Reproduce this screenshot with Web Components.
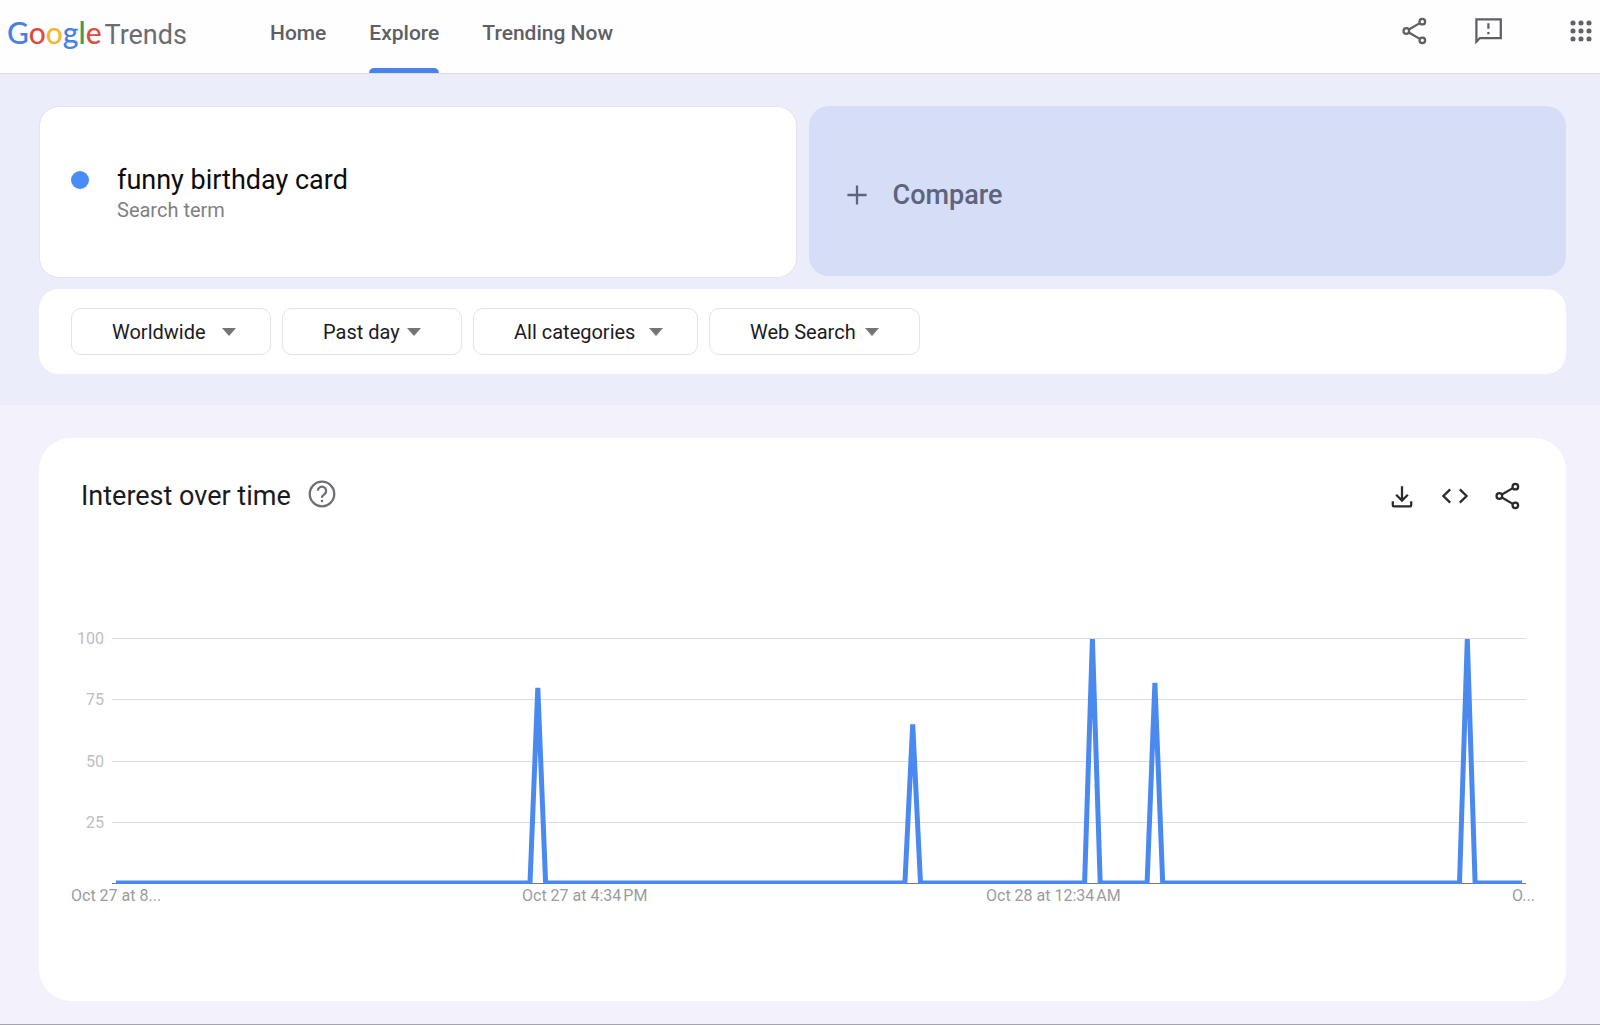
<!DOCTYPE html>
<html lang="en">
<head>
<meta charset="utf-8">
<title>funny birthday card - Explore - Google Trends</title>
<style>
    body {
        margin: 0;
        background: #f3f2fc;
        font-family: Roboto, "Liberation Sans", sans-serif;
        color: #1b1b1f;
    }
</style>
</head>
<body>
<trends-page></trends-page>

<script>
// base class: every element only has to give its template
class TrendsElement extends HTMLElement {
    constructor() {
        super();
        this.attachShadow({ mode: "open" });
    }
    connectedCallback() {
        const template = document.createElement("template");
        template.innerHTML = `<style>${this.getStyles()}</style>${this.getTemplate()}`;
        this.shadowRoot.replaceChildren(template.content.cloneNode(true));
    }
}

const ICONS = {
    share: `<path d="M7.4 10.9L15.6 6.1M7.4 13.1L15.6 17.9"/>
        <circle cx="17.5" cy="5" r="2.1"/><circle cx="5.5" cy="12" r="2.1"/><circle cx="17.5" cy="19" r="2.1"/>`,
    feedback: `<path d="M3.3 20V3.3H21.6V17.3H5.9L3.3 20z"/><path d="M12.3 6.2v4.2M12.3 12.7v1.7"/>`,
    apps: [6, 12, 18].map(y => [6, 12, 18].map(x =>
        `<circle cx="${x}" cy="${y}" r="1.9" fill="currentColor" stroke="none"/>`).join("")).join(""),
    download: `<path d="M12 4.7V15M7.6 11.1l4.4 4.4 4.4-4.4M5.1 16v3c0 .5.3.8.8.8h12.2c.5 0 .8-.3.8-.8v-3"/>`,
    code: `<path d="M8.4 7L3.3 12l5.1 5M15.6 7l5.1 5-5.1 5"/>`,
    help: `<circle cx="12" cy="12" r="9.2"/><path d="M8.9 9.6a3.1 3.1 0 1 1 5.2 2.3c-1.2 1-2.1 1.5-2.1 2.9"/><path d="M12 16.4v1.7"/>`,
    plus: `<path d="M12 4.8v14.4M4.8 12h14.4"/>`
};

class TrendsIcon extends TrendsElement {
    getTemplate() {
        return `<svg viewBox="0 0 24 24" aria-hidden="true">${ICONS[this.getAttribute("name")]}</svg>`;
    }
    getStyles() {
        return `
            :host { display: block; width: 32px; height: 32px; flex: none; }
            svg {
                display: block; width: 100%; height: 100%;
                fill: none; stroke: currentColor; stroke-width: 1.7;
            }
        `;
    }
}
customElements.define("trends-icon", TrendsIcon);

class IconButton extends TrendsElement {
    getTemplate() {
        return `<button type="button" aria-label="${this.getAttribute("label")}">
            <trends-icon name="${this.getAttribute("icon")}"></trends-icon>
        </button>`;
    }
    getStyles() {
        return `
            :host { display: block; }
            button { display: block; padding: 0; border: 0; background: none; color: inherit; cursor: pointer; }
        `;
    }
}
customElements.define("icon-button", IconButton);

class TrendsHeader extends TrendsElement {
    getTemplate() {
        return `
            <a class="logo" href="#home" aria-label="Google Trends"><span class="google"><span class="b">G</span><span class="r">o</span><span class="y">o</span><span class="b">g</span><span class="g">l</span><span class="r">e</span></span><span class="trends">Trends</span></a>
            <nav>
                <a href="#home">Home</a>
                <a href="#explore" aria-current="page">Explore</a>
                <a href="#trending">Trending Now</a>
            </nav>
            <div class="actions">
                <icon-button icon="share" label="Share"></icon-button>
                <icon-button icon="feedback" label="Send feedback"></icon-button>
                <icon-button class="apps" icon="apps" label="Google apps"></icon-button>
            </div>
        `;
    }
    getStyles() {
        return `
            :host {
                display: flex;
                height: 73px;
                padding: 0 3px 0 7px;
                background: #fefdff;
                border-bottom: 1px solid #dddbe8;
                color: #5f6063;
            }
            a { color: inherit; text-decoration: none; }
            .logo {
                display: flex;
                align-items: baseline;
                gap: 3px;
                width: 263px;
                padding-top: 13px;
                line-height: 38px;
            }
            .google { font-family: Lato, sans-serif; font-size: 30px; font-weight: 500; }
            .trends { font-size: 27px; color: #6b6c70; }
            .b { color: #4681e0; }
            .r { color: #dc4c3c; }
            .y { color: #f2b92f; }
            .g { color: #3d9b57; }
            nav { display: flex; gap: 43px; font-size: 21px; font-weight: 500; }
            nav a {
                display: grid;
                grid-template-rows: 66px 7px;
                align-items: center;
                white-space: nowrap;
            }
            nav a[aria-current]::after {
                content: "";
                align-self: end;
                height: 5px;
                border-radius: 5px 5px 0 0;
                background: #4a83e6;
            }
            .actions { display: flex; align-items: center; gap: 41px; margin-left: auto; padding-bottom: 11px; }
            .apps { margin-left: 20px; }
        `;
    }
}
customElements.define("trends-header", TrendsHeader);

class SearchTerm extends TrendsElement {
    getTemplate() {
        return `
            <span class="dot"></span>
            <div>
                <h2><slot></slot></h2>
                <p><slot name="type"></slot></p>
            </div>
        `;
    }
    getStyles() {
        return `
            :host {
                display: flex;
                align-items: center;
                gap: 28px;
                box-sizing: border-box;
                height: 172px;
                padding: 4px 31px 0;
                border: 1px solid #e8e2ef;
                border-radius: 20px;
                background: #fff;
            }
            .dot { width: 18px; height: 18px; margin-bottom: 28px; border-radius: 50%; background: #4a8cf7; }
            h2 { margin: 0; font-size: 27px; font-weight: 400; line-height: 32px; color: #0c0c0e; }
            p { margin: 0; font-size: 20px; line-height: 28px; color: #808084; }
        `;
    }
}
customElements.define("search-term", SearchTerm);

class CompareButton extends TrendsElement {
    getTemplate() {
        return `<button type="button"><trends-icon name="plus"></trends-icon><slot></slot></button>`;
    }
    getStyles() {
        return `
            :host { display: block; }
            button {
                display: flex;
                align-items: center;
                gap: 20px;
                width: 100%;
                height: 170px;
                padding: 7px 32px 0;
                border: 0;
                border-radius: 20px;
                background: #d6ddf6;
                color: #5d647c;
                font: 500 27px/32px Roboto, sans-serif;
                cursor: pointer;
            }
        `;
    }
}
customElements.define("compare-button", CompareButton);

class FilterSelect extends TrendsElement {
    getTemplate() {
        return `
            <select aria-label="${this.getAttribute("label")}">
                <option>${this.getAttribute("value")}</option>
            </select>
            <svg viewBox="0 0 14 8" aria-hidden="true"><path d="M0 0h14L7 8z"/></svg>
        `;
    }
    getStyles() {
        return `
            :host {
                display: flex;
                align-items: center;
                justify-content: space-between;
                box-sizing: border-box;
                height: 47px;
                padding: 0 var(--end, 34px) 0 40px;
                border: 1px solid #e4e1e8;
                border-radius: 10px;
                background: #fff;
            }
            select {
                appearance: none;
                padding: 0;
                border: 0;
                background: none;
                color: #1b1b1f;
                font: 400 20px/28px Roboto, sans-serif;
            }
            svg { width: 14px; height: 8px; fill: #757578; }
        `;
    }
}
customElements.define("filter-select", FilterSelect);

// values are hits per 8 minute slot, all the other slots are 0
const SLOTS = 180;
const HITS = { 54: 80, 102: 65, 125: 100, 133: 82, 173: 100 };

class TimeChart extends TrendsElement {
    getLine() {
        const points = [];
        for (let i = 0; i <= SLOTS; i++) {
            const x = 45 + i * 1406 / SLOTS;
            const y = 259 - (HITS[i] || 0) * 2.44;
            points.push(`${x.toFixed(1)},${y.toFixed(1)}`);
        }
        return points.join(" ");
    }
    getTemplate() {
        const rows = [[100, 15], [75, 76], [50, 138], [25, 199]];
        return `
            <svg viewBox="0 0 1463 290" role="img" aria-label="Interest over time chart">
                <clipPath id="area"><rect x="41" y="14" width="1414" height="246"/></clipPath>
                ${rows.map(([value, y]) => `
                    <rect class="grid" x="41" y="${y - 1}" width="1414" height="1"/>
                    <text class="value" x="33" y="${y + 5}">${value}</text>`).join("")}
                <rect class="axis" x="41" y="259" width="1414" height="1"/>
                <polyline clip-path="url(#area)" points="${this.getLine()}"/>
                <text x="0" y="277">Oct 27 at 8...</text>
                <text x="451" y="277">Oct 27 at 4:34&#8239;PM</text>
                <text x="915" y="277">Oct 28 at 12:34&#8239;AM</text>
                <text x="1441" y="277">O...</text>
            </svg>
        `;
    }
    getStyles() {
        return `
            :host { display: block; }
            svg { display: block; width: 100%; }
            .grid { fill: #dcdbe0; }
            .axis { fill: #77777c; }
            polyline { fill: none; stroke: #4a8af0; stroke-width: 5; }
            text { font: 400 16px Roboto, sans-serif; fill: #9b9ba0; }
            .value { fill: #bdbdc2; text-anchor: end; }
        `;
    }
}
customElements.define("time-chart", TimeChart);

class TrendsWidget extends TrendsElement {
    getTemplate() {
        return `
            <header>
                <h1>${this.getAttribute("heading")}</h1>
                <icon-button class="help" icon="help" label="Help"></icon-button>
                <div class="tools">
                    <icon-button icon="download" label="Download CSV"></icon-button>
                    <icon-button icon="code" label="Embed"></icon-button>
                    <icon-button icon="share" label="Share"></icon-button>
                </div>
            </header>
            <slot></slot>
        `;
    }
    getStyles() {
        return `
            :host {
                display: block;
                padding: 40px 32px 87px;
                border-radius: 32px;
                background: #fff;
            }
            header {
                display: flex;
                align-items: center;
                gap: 15px;
                height: 36px;
                margin-bottom: 110px;
                padding: 0 10px;
            }
            h1 { margin: 0; font-size: 27px; font-weight: 400; line-height: 32px; }
            .help { padding-bottom: 4px; color: #6f6f73; }
            .tools { display: flex; gap: 21px; margin-left: auto; color: #2b2b2f; }
        `;
    }
}
customElements.define("trends-widget", TrendsWidget);

class TrendsPage extends TrendsElement {
    getTemplate() {
        return `
            <trends-header></trends-header>
            <section class="query">
                <div class="terms">
                    <search-term>funny birthday card<span slot="type">Search term</span></search-term>
                    <compare-button>Compare</compare-button>
                </div>
                <div class="filters">
                    <filter-select class="geo" label="Location" value="Worldwide"></filter-select>
                    <filter-select class="time" label="Time" value="Past day"></filter-select>
                    <filter-select class="category" label="Category" value="All categories"></filter-select>
                    <filter-select class="property" label="Search type" value="Web Search"></filter-select>
                </div>
            </section>
            <main>
                <trends-widget heading="Interest over time"><time-chart></time-chart></trends-widget>
            </main>
        `;
    }
    getStyles() {
        return `
            :host { display: block; border-bottom: 1px solid #a5a4ae; }
            .query { padding: 32px 34px 31px 39px; background: #ebedfa; }
            .terms { display: grid; grid-template-columns: 1fr 1fr; gap: 12px; }
            .filters {
                display: flex;
                flex-wrap: wrap;
                gap: 11px;
                margin-top: 11px;
                padding: 19px 32px;
                border-radius: 20px;
                background: #fff;
            }
            .geo { width: 200px; }
            .time { width: 180px; --end: 40px; }
            .category { width: 225px; }
            .property { width: 211px; --end: 40px; }
            main { padding: 33px 34px 23px 39px; }
        `;
    }
}
customElements.define("trends-page", TrendsPage);
</script>
</body>
</html>
